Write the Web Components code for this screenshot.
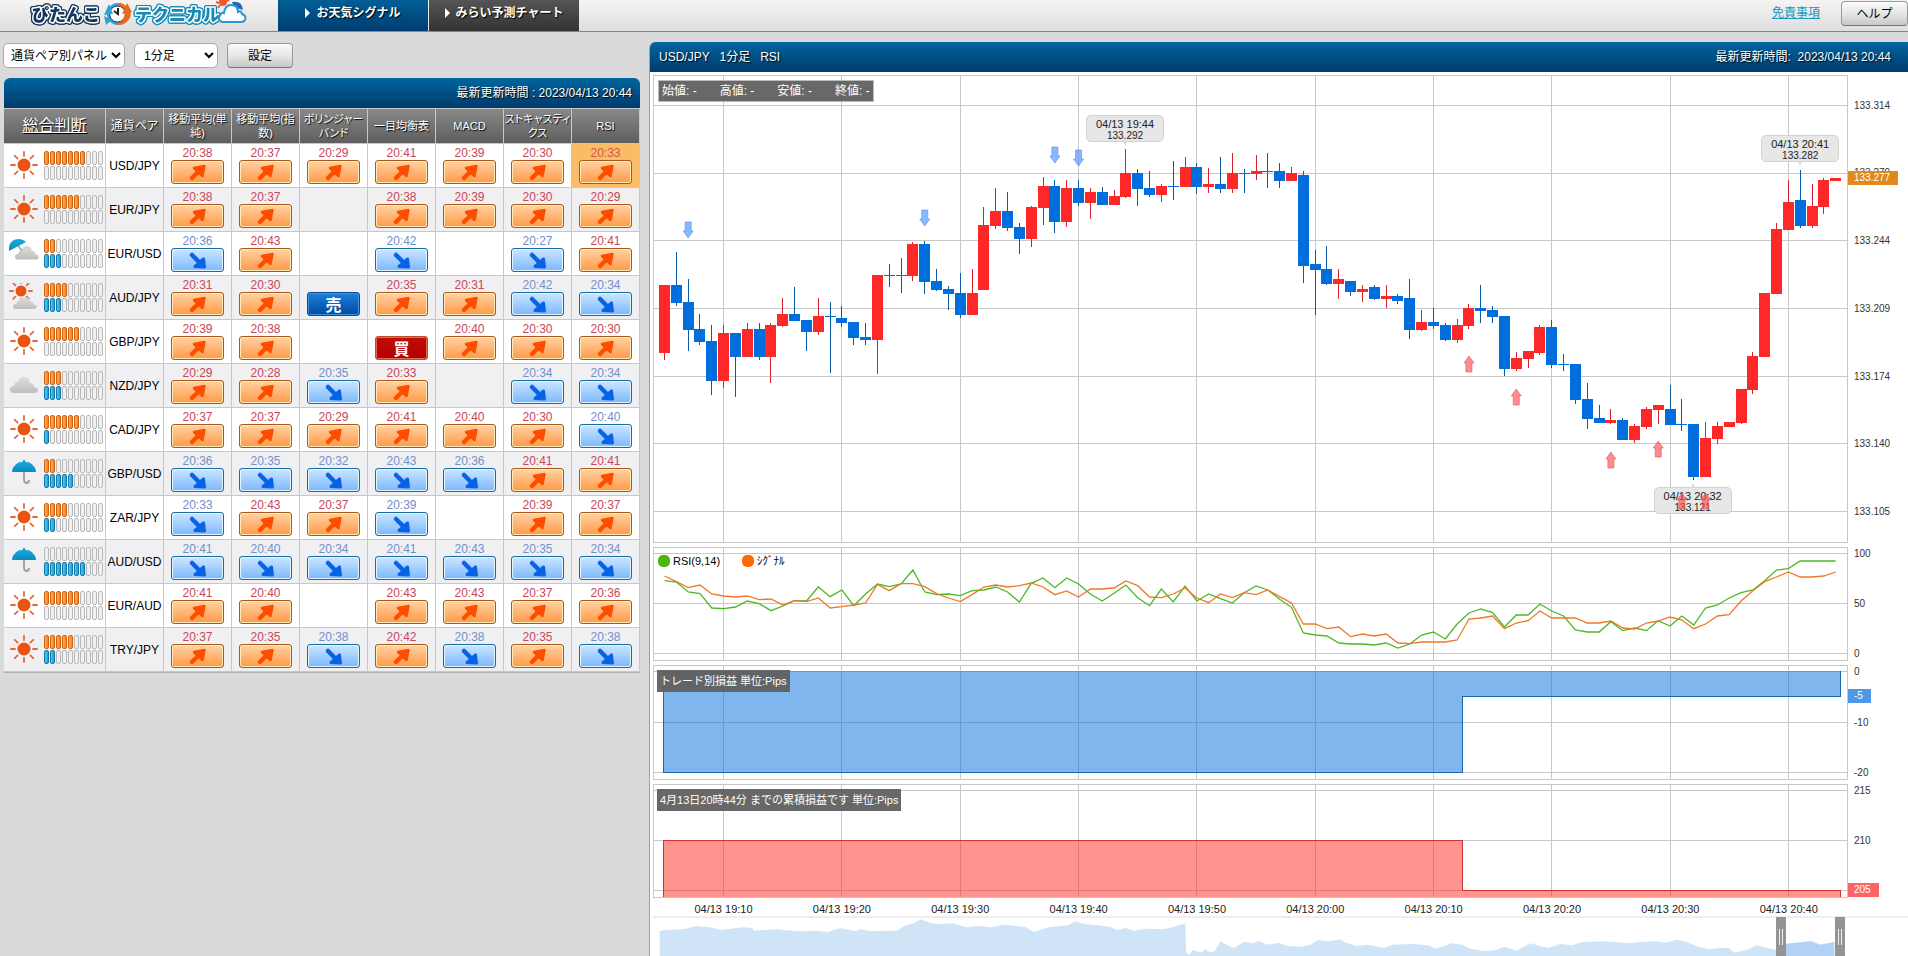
<!DOCTYPE html>
<html lang="ja">
<head>
<meta charset="utf-8">
<title>ぴたんこテクニカル</title>
<style>
html, body { margin: 0; height: 100%; }
body { background: #dadada; overflow: hidden; font: 12px/16px "Liberation Sans", "Noto Sans CJK JP", sans-serif; color: #000; }
</style>
</head>
<body>
<technical-app></technical-app>

<script>
const SVG_DEFS = {
  up: '<path d="M19 17 L27 9" stroke="#ff4d00" stroke-width="4.500" stroke-linecap="round"/><path d="M21 7 L31.500 5 L29.500 15 L26 12Z" fill="#ff4d00" stroke="#ff4d00" stroke-width="2.500" stroke-linejoin="round"/>',
  down: '<path d="M19 6 L27 14" stroke="#0a63e6" stroke-width="4.500" stroke-linecap="round"/><path d="M31.500 18 L30.500 10 L27 13 L25 15 L22 17.500Z" fill="#0a63e6" stroke="#0a63e6" stroke-width="3" stroke-linejoin="round"/>'
};

function define(name, html, setup) {
  const template = document.createElement('template');
  template.innerHTML = html;
  customElements.define(name, class extends HTMLElement {
    constructor() {
      super();
      this.attachShadow({ mode: 'open' }).append(template.content.cloneNode(true));
    }
    connectedCallback() {
      if (setup && !this.ready) { this.ready = true; setup(this, this.shadowRoot); }
    }
  });
}

/* ---------- small parts ---------- */

define('soft-button', `
<style>
  :host { display: block; width: 66px; height: 25px; }
  button { box-sizing: border-box; width: 100%; height: 100%; padding: 0; border: 1px solid #999; border-bottom-color: #777; border-radius: 4px;
    background: linear-gradient(#fafafa, #e6e6e6 50%, #c8c8c8); box-shadow: inset 0 1px #fff; font: inherit; color: #000; }
</style>
<button type="button"><slot></slot></button>`);

define('site-logo', `
<style>
  :host { display: block; width: 278px; height: 31px; }
  svg { display: block; }
  text { font: 900 17px "Noto Sans CJK JP", sans-serif; paint-order: stroke; stroke: #fff; stroke-width: 3px; stroke-linejoin: round; }
  .a { fill: #14365c; filter: drop-shadow(1px 0 #14365c) drop-shadow(-1px 0 #14365c) drop-shadow(0 1px #14365c) drop-shadow(0 -1px #14365c); }
  .b { fill: #1689b4; filter: drop-shadow(1px 0 #1689b4) drop-shadow(-1px 0 #1689b4) drop-shadow(0 1px #1689b4) drop-shadow(0 -1px #1689b4); }
</style>
<svg width="278" height="31" viewBox="0 0 278 31">
  <text class="a" x="32" y="21">ぴたんこ</text>
  <circle cx="118" cy="14" r="11" fill="#2aa4d6"/>
  <path d="M118 3 A11 11 0 0 1 118 25Z" fill="#ec6a1c"/>
  <circle cx="117.500" cy="14" r="8" fill="#fff" stroke="#14365c"/>
  <path d="M104 15 L109 4 L113 14Z M106 25 L104 16 L112 20Z" fill="#2aa4d6"/>
  <path d="M132 12 L127 3 L122 14Z M131 12 Q131 22 121 25 L125 14Z" fill="#ec6a1c"/>
  <path d="M118 8 L118 14 L114 11" fill="none" stroke="#222" stroke-width="2"/>
  <text class="b" x="135" y="21">テクニカル</text>
  <circle cx="223" cy="2" r="4" fill="#f0582a"/>
  <path d="M216 2 L219 3 M218 8 L220 5 M229 0 L227 1" stroke="#f0582a" stroke-width="2"/>
  <path d="M232 2 Q242 0 243 10 L234 7Z" fill="#1c6cb4"/>
  <path d="M222 22 Q217 20 220 15 Q222 12 224 13 Q225 5 231 5 Q238 5 238 12 Q241 10 242 14 Q247 16 245 20 Q244 22 241 22Z" fill="#fff" stroke="#2a95cf" stroke-width="2"/>
</svg>`);

define('nav-tab', `
<style>
  :host { display: block; width: 150px; height: 31px; background: linear-gradient(#555, #333); }
  :host([active]) { background: linear-gradient(#005f96, #003c70); }
  a { display: flex; align-items: center; justify-content: center; gap: 6px; height: 25px; color: #fff; font-weight: bold; text-decoration: none; text-shadow: 1px 1px 1px #000; }
  i { border: 5px solid transparent; border-left-color: #fff; border-right: 0; }
</style>
<a href="#"><i></i><span><slot></slot></span></a>`);

define('app-header', `
<style>
  :host { display: flex; height: 31px; border-bottom: 1px solid #868686; background: linear-gradient(#f6f4f3, #dedede); }
  nav { display: flex; gap: 1px; flex: 1; }
  .link { margin: 5px 21px 0 0; height: 16px; color: #1a97bd; }
  soft-button { width: 67px; margin-top: 1px; }
</style>
<site-logo></site-logo>
<nav><nav-tab active>お天気シグナル</nav-tab><nav-tab>みらい予測チャート</nav-tab></nav>
<a class="link" href="#">免責事項</a>
<soft-button>ヘルプ</soft-button>`);

define('panel-title', `
<style>
  :host { display: flex; align-items: center; height: 30px; color: #fff; background: linear-gradient(#00669f, #003a6c); text-shadow: 1px 1px 1px #000; }
</style>
<slot></slot>`);

/* ---------- signal table ---------- */

const SUN = (x, y, r) => {
  let rays = '';
  for (let a = 0; a < 8; a++) {
    const c = Math.cos(a * Math.PI / 4), s = Math.sin(a * Math.PI / 4);
    rays += `M${x + c * (r + 2.5)} ${y + s * (r + 2.5)}L${x + c * (r * 2)} ${y + s * (r * 2)}`;
  }
  return `<circle cx="${x}" cy="${y}" r="${r}" fill="#e85414"/><path d="${rays}" stroke="#e06a3c" stroke-width="1.800" stroke-linecap="round"/>`;
};
const CLOUD = (transform) => `<path transform="${transform}" d="M4 16 Q0 16 0 12.500 Q0 9 4 9 Q4 5 8 5 Q9 0 14 0 Q19 0 20 6 Q24 6 24 10 Q28 10 28 13 Q28 16 24 16Z" fill="url(#g)"/>`;
const ICONS = {
  sun: SUN(15, 14, 6.5),
  cloud: CLOUD('translate(1 6)'),
  suncloud: SUN(12, 8, 5.5) + CLOUD('translate(4 14) scale(.85 .75)'),
  rain: '<path d="M15 9 V20 Q15 24 17.500 24 Q20 24 20 21" fill="none" stroke="#999" stroke-width="1.800"/><path d="M3 13 Q4 3 15 2.500 Q26 3 27 13Z" fill="url(#u)"/><path d="M15 1 V4" stroke="#0a86b4" stroke-width="1.500"/>',
  raincloud: '<path d="M8 5 L13 12" stroke="#999" stroke-width="1.500"/><path d="M0 12 Q-1 1 9 0 Q14 0 17 3Z" fill="url(#u)"/>' + CLOUD('translate(6 7) scale(.85 .85)')
};

define('weather-icon', `
<style>:host { display: block; width: 30px; height: 30px; }</style>
<svg width="30" height="30" viewBox="0 0 30 30"><defs>
<linearGradient id="g" x2="0" y2="1"><stop stop-color="#dcdcdc"/><stop offset="1" stop-color="#bebebe"/></linearGradient>
<linearGradient id="u" x2="0" y2="1"><stop stop-color="#1cabe0"/><stop offset="1" stop-color="#0a8ab8"/></linearGradient>
</defs><g></g></svg>`, (el, root) => { root.querySelector('g').innerHTML = ICONS[el.getAttribute('kind')]; });

define('strength-meter', `
<style>
  :host { display: grid; grid-template-columns: repeat(10, 5px); grid-auto-rows: 14px; gap: 1px; }
  i { box-sizing: border-box; border: 1px solid #b8b8b8; border-radius: 2px; background: #f0f0f0; }
  .u { border-color: #cf6410; background: linear-gradient(90deg, #ffab60, #f77f20); }
  .d { border-color: #1478a8; background: linear-gradient(90deg, #5cc8ee, #18a0d4); }
</style>`, (el, root) => {
  for (const key of ['u', 'd']) for (let i = 0; i < 10; i++) {
    const bar = document.createElement('i');
    if (i < +el.getAttribute(key)) bar.className = key;
    root.append(bar);
  }
});

define('signal-mark', `
<style>
  :host { display: flex; flex-direction: column; align-items: center; justify-content: flex-end; height: 43px; box-sizing: border-box; padding-bottom: 3px; color: #c8465c; }
  :host([kind=down]) { color: #7090cc; }
  :host([selected]) { background: #fbbc67; color: #cc5a4c; }
  time { line-height: 16px; height: 15px; }
  button { box-sizing: border-box; width: 53px; height: 24px; padding: 0; border: 1px solid #a85a18; border-radius: 3px;
    background: linear-gradient(#ffd2a4, #ff9a48); box-shadow: inset 0 0 0 1px #ffeab8; }
  svg { display: block; margin: 0 auto; }
  :host([kind=down]) button { border-color: #1a6c9c; background: linear-gradient(#cce6ff, #7cb8ff); box-shadow: inset 0 0 0 1px #e2f6ff; }
  :host([kind=sell]) button, :host([kind=buy]) button { color: #fff; font: bold 16px/20px "Noto Sans CJK JP", sans-serif; }
  :host([kind=sell]) button { border-color: #0c4a8c; background: linear-gradient(#1a80dc, #0448a0); box-shadow: inset 0 0 0 1px #3c90dc; }
  :host([kind=buy]) button { border-color: #b85020; background: linear-gradient(#c40c0c, #b00000); box-shadow: inset 0 0 0 1px #e06a50; }
</style>
<time></time><button type="button"></button>`, (el, root) => {
  const kind = el.getAttribute('kind'), button = root.querySelector('button'), time = root.querySelector('time');
  if (kind === 'sell' || kind === 'buy') { time.remove(); button.textContent = kind === 'sell' ? '売' : '買'; return; }
  time.textContent = '20:' + el.getAttribute('minute');
  button.setAttribute('aria-label', kind);
  button.innerHTML = `<svg width="49" height="22" viewBox="0 0 49 22">${SVG_DEFS[kind]}</svg>`;
});

const ROWS = `USD/JPY sun 7 0 u38 u37 u29 u41 u39 u30 u33
EUR/JPY sun 6 0 u38 u37 - u38 u39 u30 u29
EUR/USD raincloud 2 3 d36 u43 - d42 - d27 u41
AUD/JPY suncloud 4 3 u31 u30 sell u35 u31 d42 d34
GBP/JPY sun 6 0 u39 u38 - buy u40 u30 u30
NZD/JPY cloud 3 3 u29 u28 d35 u33 - d34 d34
CAD/JPY sun 6 1 u37 u37 u29 u41 u40 u30 d40
GBP/USD rain 2 5 d36 d35 d32 d43 d36 u41 u41
ZAR/JPY sun 4 2 d33 u43 u37 d39 - u39 u37
AUD/USD rain 0 7 d41 d40 d34 d41 d43 d35 d34
EUR/AUD sun 6 0 u41 u40 - u43 u43 u37 u36
TRY/JPY sun 5 2 u37 u35 d38 u42 d38 u35 d38`.split('\n').map(r => r.split(' '));

define('signal-table', `
<style>
  :host { display: block; }
  table { width: 100%; table-layout: fixed; border-spacing: 0; background: #fff; border-bottom: 1px solid #b0b0b0; }
  th, td { padding: 0; border: solid #c8c8c8; border-width: 0 1px 1px 0; }
  th { height: 35px; font-weight: normal; font-size: 11px; line-height: 14px; color: #fff; background: linear-gradient(#8a8a8a, #5e5e5e); text-shadow: 1px 1px 1px #000; box-shadow: inset 0 1px #c8c8c8; font-feature-settings: "palt"; word-break: keep-all; }
  th a { color: inherit; font-size: 16px; line-height: 20px; }
  th.pair { font-size: 12px; }
  th:nth-child(1) { width: 101px; } th:nth-child(2) { width: 57px; }
  tbody th { height: 43px; background: none; color: #000; font-size: 12px; text-shadow: none; box-shadow: none; white-space: nowrap; }
  td { height: 43px; }
  tbody tr:nth-child(even) { background: #f0f0f3; }
  .judge { display: flex; align-items: center; gap: 5px; padding: 0 2px 0 5px; }
</style>
<table>
  <thead><tr><th scope="col"><a href="#">総合判断</a></th><th class="pair" scope="col">通貨ペア</th>
  <th scope="col">移動平均(単<br>純)</th><th scope="col">移動平均(指<br>数)</th><th scope="col">ボリンジャー<br>バンド</th><th scope="col">一目均衡表</th><th scope="col">MACD</th><th scope="col">ストキャスティ<br>クス</th><th scope="col">RSI</th></tr></thead>
  <tbody></tbody>
</table>`, (el, root) => {
  root.querySelector('tbody').innerHTML = ROWS.map(([pair, icon, up, down, ...cells], row) => `<tr>
    <td><div class="judge"><weather-icon kind="${icon}"></weather-icon><strength-meter u="${up}" d="${down}"></strength-meter></div></td>
    <th scope="row">${pair}</th>${cells.map((c, col) => {
      if (c === '-') return '<td></td>';
      const kind = { u: 'up', d: 'down' }[c[0]];
      const selected = row === 0 && col === 6 ? ' selected' : '';
      return c === 'buy' || c === 'sell' ? `<td><signal-mark kind="${c}"></signal-mark></td>`
        : `<td><signal-mark kind="${kind}" minute="${c.slice(1)}"${selected}></signal-mark></td>`;
    }).join('')}</tr>`).join('');
});

define('signal-panel', `
<style>
  :host { display: block; padding: 11px 0 0 3px; }
  form { display: flex; gap: 9px; margin-bottom: 10px; }
  select { box-sizing: border-box; width: 122px; height: 25px; border: 1px solid #a8a8a8; border-radius: 5px; padding: 0 0 0 3px; background: #fff; font: inherit; color: #000; }
  #foot { width: 84px; padding-left: 5px; }
  .panel { margin-left: 1px; border-radius: 6px 6px 0 0; overflow: hidden; }
  panel-title { justify-content: flex-end; padding-right: 8px; }
</style>
<form><select aria-label="表示"><option>通貨ペア別パネル</option></select><select id="foot" aria-label="足種"><option>1分足</option></select><soft-button>設定</soft-button></form>
<div class="panel"><panel-title>最新更新時間 : 2023/04/13 20:44</panel-title><signal-table></signal-table></div>`);

/* ---------- charts: drawn on a canvas whose x runs from 653 to 1847 ---------- */

const X0 = 653, W = 1195, STEP = 11.83, FIRST = 664.5;
const xAt = i => FIRST + i * STEP;
const line = (x1, y1, x2, y2, c = '#c8c8c8') => `<path d="M${x1} ${y1}L${x2} ${y2}" stroke="${c}" vector-effect="non-scaling-stroke" shape-rendering="crispEdges"/>`;
function grid(top, height, ys) {
  let s = '';
  for (let i = 5; i < 100; i += 10) { const x = Math.floor(xAt(i)) + .5; s += line(x, top, x, top + height); }
  for (const y of ys) s += line(X0, y + .5, X0 + W, y + .5);
  return s + line(X0, top + .5, X0 + W, top + .5) + line(X0, top + height - .5, X0 + W, top + height - .5)
    + line(X0 + .5, top, X0 + .5, top + height) + line(X0 + W - .5, top, X0 + W - .5, top + height);
}

/* colour, body top, body bottom, high, low */
const CANDLES = `R285,353,285,360 B285,303,252,306 B302,330,279,351 B329,342,314,345 B341,381,325,395 R333,381,325,388 B333,357,333,397 R329,357,323,357 B329,357,323,360 R325,357,323,383
R314,326,298,327 B314,321,287,321 B320,332,320,351 R316,332,298,335 B316,317,302,373 B318,323,306,327 B322,338,322,345 B337,340,323,345 R275,340,275,374 B275,276,264,287
B275,276,258,293 R244,276,242,281 B244,282,241,294 B281,290,269,291 B289,294,286,310 B293,315,273,318 R293,315,269,315 R225,290,207,290 R211,226,188,229 B211,228,192,231
B227,239,223,254 R207,239,206,247 R186,208,177,225 B186,222,180,233 R188,222,180,227 B188,203,180,206 R192,203,188,219 B192,205,187,205 R196,205,190,205 R173,197,149,198
B173,189,169,206 B188,195,171,197 R186,195,184,202 B186,187,161,200 R167,187,157,187 B167,187,163,194 R184,187,168,193 B184,189,157,193 R173,189,153,193 B173,174,169,193
R171,174,155,180 B171,172,153,188 B171,181,163,188 R173,181,167,181 B175,266,171,283 B264,270,250,315 B269,284,246,285 R279,284,269,299 B281,292,281,296 R289,292,285,302
B287,299,285,300 R296,299,285,308 B296,301,294,304 B298,330,279,339 R322,330,310,331 B322,326,308,329 B325,340,323,341 R325,340,319,343 R308,326,304,329 B308,311,285,323
B310,317,306,323 B316,369,316,376 R358,369,352,371 R351,359,351,368 R327,353,325,355 B327,365,320,368 B364,365,354,371 B364,400,364,404 B399,419,383,429 B418,423,405,423
R420,423,409,424 B420,440,418,440 R426,440,424,443 R409,427,407,429 R405,410,405,424 B409,425,385,425 B424,425,399,431 B424,477,424,480 R438,477,422,477 R426,439,422,444
R422,427,422,427 R389,423,389,424 R356,390,352,394 R293,357,293,357 R229,294,223,294 R202,230,180,230 B200,226,170,228 R206,226,184,228 R180,207,178,214 R178,181,178,181`
  .split(/\s+/).map(s => [s[0], ...s.slice(1).split(',').map(Number)]);

function candles() {
  return CANDLES.map(([kind, top, bottom, high, low], i) => {
    const x = Math.floor(xAt(i)) + .5, red = kind === 'R';
    return line(x, high, x, low, red ? '#d8202c' : '#0a5ca4')
      + `<rect x="${x - 5.5}" y="${top}" width="11" height="${bottom - top}" fill="${red ? '#ff2828' : '#006edc'}" shape-rendering="crispEdges"/>`;
  }).join('');
}
function arrows() {
  const shape = (i, y, dir, fill, edge) => `<path transform="translate(${xAt(i)} ${y}) scale(1 ${dir})" d="M0 0L5 7H3V16H-3V7H-5Z" fill="${fill}" stroke="${edge}"/>`;
  return [[2, 238], [22, 226], [33, 163], [35, 166]].map(([i, y]) => shape(i, y, -1, '#4090ffa0', '#5a8cf0a0')).join('')
    + [[68, 356], [72, 389], [80, 452], [84, 441], [86, 493], [88, 493]].map(([i, y]) => shape(i, y, 1, '#ff4848a0', '#e05a5aa0')).join('');
}

/* vertical positions, three to a pixel, measured from y = 530 */
const RSI = [152,156,186,191,234,236,231,213,221,242,228,212,213,171,200,180,227,192,162,170,162,120,186,194,192,197,182,180,171,186,216,160,144,173,144,162,192,213,190,165,203,227,177,216,168,213,192,206,219,188,168,180,208,232,309,315,318,339,342,342,345,339,354,342,315,306,327,282,249,237,248,291,255,255,222,243,258,300,306,306,275,302,294,302,272,288,258,285,234,225,204,188,180,152,120,116,93,93,93,93];
const SIGNAL = [138,155,173,165,192,198,201,198,209,207,225,211,215,204,234,230,225,219,163,182,161,161,170,191,204,215,194,171,165,171,167,159,171,194,183,201,177,177,174,153,167,201,203,192,174,204,218,192,203,188,194,180,200,219,282,282,296,291,320,312,318,312,339,341,336,336,336,330,267,264,258,296,279,272,243,264,264,264,279,279,273,294,297,279,273,261,270,296,282,258,254,213,182,155,141,126,141,141,138,126];
const curve = (data, c) => `<polyline points="${data.map((v, i) => xAt(i) + ',' + (530 + v / 3)).join(' ')}" fill="none" stroke="${c}" stroke-width="1.300" vector-effect="non-scaling-stroke"/>`;

const NAV_A = [48,484,60,480,105,478,140,468,170,472,200,480,250,472,275,474,280,482,330,478,390,484,430,482,460,486,490,474,530,484,538,477,560,483,630,482,650,466,670,460,688,448,710,458,730,462,765,460,800,472,830,468,860,472,890,464,920,468,945,472,965,486,1000,472,1050,466,1065,454,1090,462,1120,466,1150,470,1170,480,1190,474,1210,482,1240,476,1280,478,1310,470,1336,460,1338,545,1345,556,1355,540,1375,548,1385,538,1400,548,1410,540,1422,512,1430,520,1455,534,1480,515,1500,520,1515,514,1540,524,1566,518];
const NAV_B = [0,520,20,528,50,530,75,525,95,510,120,514,150,508,160,516,190,528,220,524,260,534,280,524,330,522,370,526,390,536,430,520,455,524,475,536,510,543,540,540,560,530,590,542,625,520,650,528,670,534,700,522,730,526,755,516,810,514,870,520,900,516,940,514,965,518,990,509,1010,514,1040,528,1070,538,1100,534,1120,534,1135,548,1170,538,1190,526,1215,534,1240,540,1262,522,1290,518,1325,514,1350,524,1375,518,1384,516];
function overview() {
  const pts = [];
  for (let i = 0; i < NAV_A.length; i += 2) pts.push([640 + NAV_A[i] / 2.45, 770 + NAV_A[i + 1] / 3]);
  for (let i = 0; i < NAV_B.length; i += 2) pts.push([1280 + NAV_B[i] / 2.497, 770 + NAV_B[i + 1] / 3]);
  const area = (list, c) => `<path d="M${list[0][0]} 960L${list.map(p => p.join(' ')).join('L')}L${list.at(-1)[0]} 960Z" fill="${c}"/>`;
  const handle = x => `<path d="M${x} 917h10v43h-10z" fill="#949494"/><path d="M${x + 3.5} 929v16m3 -16v16" stroke="#eee"/>`;
  return area(pts, '#d0e4f8') + area(pts.filter(p => p[0] >= 1785), '#b2d2f4') + handle(1776) + handle(1835);
}

const DRAW = {
  price: () => grid(75, 468, [105, 173, 240, 308, 376, 443, 511]) + candles(),
  rsi: () => grid(547, 114, [553, 603, 653]) + curve(RSI, '#4cb824') + curve(SIGNAL, '#f07828'),
  trade: () => grid(665, 115, [671, 722, 772]) + '<path d="M663 671V772H1462.500V696.500H1840.500V671Z" fill="#006edc80"/><path d="M663.500 671V772.500H1462.500V696.500H1840.500V671" fill="none" stroke="#1a68b0" shape-rendering="crispEdges"/>',
  total: () => grid(784, 114, [790, 840, 890]) + '<path d="M663 897V840H1462.500V890H1840.500V897Z" fill="#ff281e80"/><path d="M663.500 897V840.500H1462.500V890.500H1840.500V897" fill="none" stroke="#d03038" shape-rendering="crispEdges"/>',
  overview
};

define('chart-pane', `
<style>
  :host { display: grid; grid-template-columns: minmax(0, 1fr) 60px; }
  .plot, .axis { position: relative; }
  svg { display: block; width: 100%; }
  .over { position: absolute; inset: 0; pointer-events: none; }
  .axis span { position: absolute; left: 0; padding: 0 8px 0 6px; font-size: 10px; line-height: 14px; color: #333; }
  .axis .now { color: #fff; }
</style>
<div class="plot"><svg class="main" preserveAspectRatio="none"></svg><slot></slot></div><div class="axis"></div>`, (el, root) => {
  const kind = el.getAttribute('kind'), top = +el.getAttribute('top'), h = +el.getAttribute('rows');
  const svg = root.querySelector('.main');
  svg.setAttribute('viewBox', `${X0} ${top} ${W} ${h}`);
  svg.setAttribute('height', h);
  svg.innerHTML = DRAW[kind]();
  if (kind === 'price') {
    const over = svg.cloneNode();
    over.setAttribute('class', 'over');
    over.innerHTML = arrows();
    root.querySelector('.plot').append(over);
  }
  for (const item of (el.getAttribute('labels') || '').split(' ').filter(Boolean)) {
    const [text, y, colour] = item.split('@');
    const label = document.createElement('span');
    label.textContent = text;
    label.style.top = y - top - 7 + 'px';
    if (colour) { label.className = 'now'; label.style.background = colour; }
    root.querySelector('.axis').append(label);
  }
});

define('price-balloon', `
<style>
  :host { position: absolute; transform: translateX(-50%); box-sizing: border-box; width: 78px; height: 27px; border: 1px solid #d2d2d2; border-radius: 5px; background: #e6e6e6f0; text-align: center; font-size: 11px; line-height: 12px; color: #222; padding-top: 2px; }
  :host::after { content: ""; position: absolute; left: 50%; top: 100%; margin-left: -2px; border: 2px solid transparent; border-top: 5px solid #d8d8d8; border-bottom: 0; }
  :host([below])::after { top: auto; bottom: 100%; border-top: 0; border-bottom: 5px solid #d8d8d8; }
  small { display: block; font-size: 10px; }
</style>
<slot></slot><small><slot name="price"></slot></small>`);

define('chart-caption', `
<style>
  :host { position: absolute; left: 4px; top: 5px; display: flex; align-items: center; height: 22px; padding: 0 3px; background: #606060f2; color: #fff; font-size: 11px; white-space: pre; }
  :host([large]) { box-sizing: border-box; left: 5px; border: 1px solid #bbb; padding: 0 3px; font-size: 12px; gap: 23px; }
</style><slot></slot>`);

define('chart-legend', `
<style>
  :host { position: absolute; left: 5px; top: 7px; display: flex; gap: 22px; font-size: 11px; line-height: 14px; color: #000; }
  span { display: flex; align-items: center; gap: 3px; }
  i { width: 12px; height: 12px; border-radius: 5px; background: #4cb80c; }
  .s i { background: #ff6a08; }
</style>
<span><i></i>RSI(9,14)</span><span class="s"><i></i>ｼｸﾞﾅﾙ</span>`);

define('time-axis', `
<style>
  :host { display: grid; grid-template-columns: minmax(0, 1fr) 60px; border-bottom: 2px solid #eee; }
  div { display: grid; grid-template-columns: repeat(10, 10%); margin-left: 0.95%; height: 18px; font-size: 11px; line-height: 22px; text-align: center; color: #222; }
</style><div></div>`, (el, root) => {
  root.querySelector('div').innerHTML = ['19:10', '19:20', '19:30', '19:40', '19:50', '20:00', '20:10', '20:20', '20:30', '20:40'].map(t => `<span>04/13 ${t}</span>`).join('');
});

define('chart-panel', `
<style>
  :host { display: block; padding-top: 10px; min-width: 0; }
  .box { border-left: 1px solid #a0a0a0; border-radius: 6px 0 0 0; overflow: hidden; background: #fff; }
  panel-title { justify-content: space-between; padding: 0 17px 0 9px; white-space: pre; }
  .charts { display: flex; flex-direction: column; gap: 4px; padding: 3px 0 0 3px; }
  time-axis { margin-top: -4px; }
  .view { margin-top: -5px; }
</style>
<div class="box">
  <panel-title><span>USD/JPY   1分足   RSI</span><span>最新更新時間:  2023/04/13 20:44</span></panel-title>
  <div class="charts">
    <chart-pane kind="price" top="75" rows="468" labels="133.314@106 133.279@173 133.244@241 133.209@309 133.174@377 133.140@444 133.105@512 133.277@178@#e08a1c">
      <chart-caption large><span>始値: -</span><span>高値: -</span><span>安値: -</span><span>終値: -</span></chart-caption>
      <price-balloon style="left: 39.5%; top: 40px">04/13 19:44<span slot="price">133.292</span></price-balloon>
      <price-balloon style="left: 96%; top: 60px">04/13 20:41<span slot="price">133.282</span></price-balloon>
      <price-balloon below style="left: 87%; top: 412px">04/13 20:32<span slot="price">133.121</span></price-balloon>
    </chart-pane>
    <chart-pane kind="rsi" top="547" rows="114" labels="100@554 50@604 0@654"><chart-legend></chart-legend></chart-pane>
    <chart-pane kind="trade" top="665" rows="115" labels="0@672 -10@723 -20@773 -5@696@#4c98e4"><chart-caption>トレード別損益 単位:Pips</chart-caption></chart-pane>
    <chart-pane kind="total" top="784" rows="114" labels="215@791 210@841 205@890@#ff6464"><chart-caption>4月13日20時44分 までの累積損益です 単位:Pips</chart-caption></chart-pane>
    <time-axis></time-axis>
    <chart-pane class="view" kind="overview" top="917" rows="43"></chart-pane>
  </div>
</div>`);

define('technical-app', `
<style>
  :host { display: block; height: 100vh; overflow: hidden; }
  main { display: grid; grid-template-columns: 640px minmax(0, 1fr); gap: 9px; align-items: start; }
</style>
<app-header></app-header>
<main><signal-panel></signal-panel><chart-panel></chart-panel></main>`);
</script>
</body>
</html>
